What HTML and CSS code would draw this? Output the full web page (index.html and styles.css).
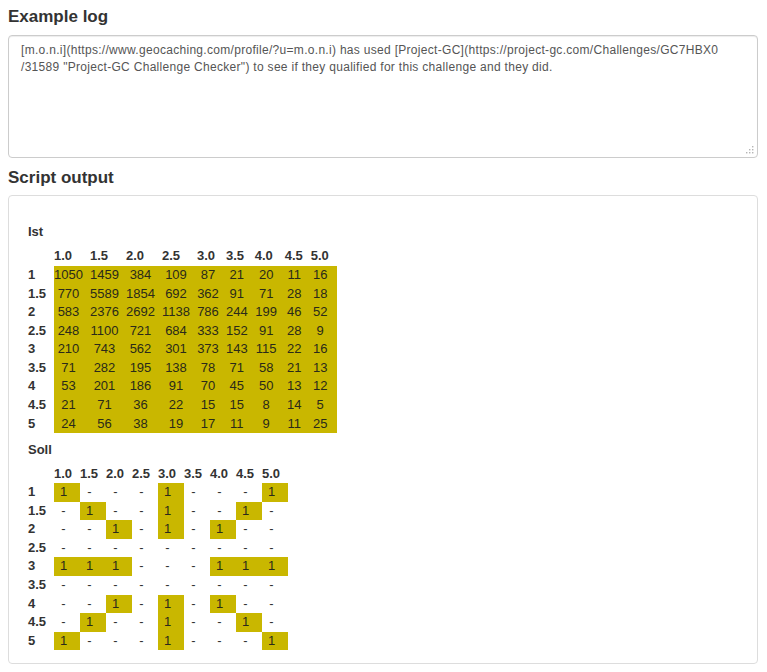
FILE: index.html
```html
<!DOCTYPE html>
<html lang="en">
<head>
<meta charset="utf-8">
<title>Example log</title>
<link rel="stylesheet" href="styles.css">
</head>
<body>
<div class="page">
  <h4 class="title">Example log</h4>
  <div class="logbox" role="textbox" aria-multiline="true" aria-readonly="true">
    <span class="nb">[m.o.n.i](https://www.geocaching.com/profile/?u=m.o.n.i)</span> has used <span class="nb">[Project-GC](https://project-gc.com/Challenges/GC7HBX0</span><wbr><span class="nb">/31589</span> "Project-GC Challenge Checker") to see if they qualified for this challenge and they did.
    <svg class="grip" width="9" height="9" viewBox="0 0 9 9" aria-hidden="true">
      <rect x="7" y="1" width="1.4" height="1.4" fill="#b5b5b5"/>
      <rect x="4" y="4" width="1.4" height="1.4" fill="#b5b5b5"/>
      <rect x="7" y="4" width="1.4" height="1.4" fill="#b5b5b5"/>
      <rect x="1" y="7" width="1.4" height="1.4" fill="#b5b5b5"/>
      <rect x="4" y="7" width="1.4" height="1.4" fill="#b5b5b5"/>
      <rect x="7" y="7" width="1.4" height="1.4" fill="#b5b5b5"/>
    </svg>
  </div>

  <h4 class="title title-output">Script output</h4>
  <div class="output">
    <div class="label">Ist</div>
    <table class="grid ist">
      <tr>
        <th class="rh"></th>
        <th class="w36">1.0</th><th class="w36">1.5</th><th class="w36">2.0</th><th class="w35">2.5</th><th class="w29">3.0</th><th class="w28">3.5</th><th class="w30">4.0</th><th class="w26">4.5</th><th class="w26">5.0</th>
      </tr>
      <tr><th>1</th><td class="hl">1050</td><td class="hl">1459</td><td class="hl">384</td><td class="hl">109</td><td class="hl">87</td><td class="hl">21</td><td class="hl">20</td><td class="hl">11</td><td class="hl">16</td></tr>
      <tr><th>1.5</th><td class="hl">770</td><td class="hl">5589</td><td class="hl">1854</td><td class="hl">692</td><td class="hl">362</td><td class="hl">91</td><td class="hl">71</td><td class="hl">28</td><td class="hl">18</td></tr>
      <tr><th>2</th><td class="hl">583</td><td class="hl">2376</td><td class="hl">2692</td><td class="hl">1138</td><td class="hl">786</td><td class="hl">244</td><td class="hl">199</td><td class="hl">46</td><td class="hl">52</td></tr>
      <tr><th>2.5</th><td class="hl">248</td><td class="hl">1100</td><td class="hl">721</td><td class="hl">684</td><td class="hl">333</td><td class="hl">152</td><td class="hl">91</td><td class="hl">28</td><td class="hl">9</td></tr>
      <tr><th>3</th><td class="hl">210</td><td class="hl">743</td><td class="hl">562</td><td class="hl">301</td><td class="hl">373</td><td class="hl">143</td><td class="hl">115</td><td class="hl">22</td><td class="hl">16</td></tr>
      <tr><th>3.5</th><td class="hl">71</td><td class="hl">282</td><td class="hl">195</td><td class="hl">138</td><td class="hl">78</td><td class="hl">71</td><td class="hl">58</td><td class="hl">21</td><td class="hl">13</td></tr>
      <tr><th>4</th><td class="hl">53</td><td class="hl">201</td><td class="hl">186</td><td class="hl">91</td><td class="hl">70</td><td class="hl">45</td><td class="hl">50</td><td class="hl">13</td><td class="hl">12</td></tr>
      <tr><th>4.5</th><td class="hl">21</td><td class="hl">71</td><td class="hl">36</td><td class="hl">22</td><td class="hl">15</td><td class="hl">15</td><td class="hl">8</td><td class="hl">14</td><td class="hl">5</td></tr>
      <tr><th>5</th><td class="hl">24</td><td class="hl">56</td><td class="hl">38</td><td class="hl">19</td><td class="hl">17</td><td class="hl">11</td><td class="hl">9</td><td class="hl">11</td><td class="hl">25</td></tr>
    </table>

    <div class="label">Soll</div>
    <table class="grid soll">
      <tr>
        <th class="rh"></th>
        <th>1.0</th><th>1.5</th><th>2.0</th><th>2.5</th><th>3.0</th><th>3.5</th><th>4.0</th><th>4.5</th><th>5.0</th>
      </tr>
      <tr><th>1</th><td class="hl">1</td><td>-</td><td>-</td><td>-</td><td class="hl">1</td><td>-</td><td>-</td><td>-</td><td class="hl">1</td></tr>
      <tr><th>1.5</th><td>-</td><td class="hl">1</td><td>-</td><td>-</td><td class="hl">1</td><td>-</td><td>-</td><td class="hl">1</td><td>-</td></tr>
      <tr><th>2</th><td>-</td><td>-</td><td class="hl">1</td><td>-</td><td class="hl">1</td><td>-</td><td class="hl">1</td><td>-</td><td>-</td></tr>
      <tr><th>2.5</th><td>-</td><td>-</td><td>-</td><td>-</td><td>-</td><td>-</td><td>-</td><td>-</td><td>-</td></tr>
      <tr><th>3</th><td class="hl">1</td><td class="hl">1</td><td class="hl">1</td><td>-</td><td>-</td><td>-</td><td class="hl">1</td><td class="hl">1</td><td class="hl">1</td></tr>
      <tr><th>3.5</th><td>-</td><td>-</td><td>-</td><td>-</td><td>-</td><td>-</td><td>-</td><td>-</td><td>-</td></tr>
      <tr><th>4</th><td>-</td><td>-</td><td class="hl">1</td><td>-</td><td class="hl">1</td><td>-</td><td class="hl">1</td><td>-</td><td>-</td></tr>
      <tr><th>4.5</th><td>-</td><td class="hl">1</td><td>-</td><td>-</td><td class="hl">1</td><td>-</td><td>-</td><td class="hl">1</td><td>-</td></tr>
      <tr><th>5</th><td class="hl">1</td><td>-</td><td>-</td><td>-</td><td class="hl">1</td><td>-</td><td>-</td><td>-</td><td class="hl">1</td></tr>
    </table>
  </div>
</div>
</body>
</html>
```

FILE: styles.css
```css
html, body {
  background: #ffffff;
}

body {
  margin: 8px;
  font-family: "Liberation Sans", Arial, sans-serif;
  color: #333333;
}

.page {
  width: 750px;
}

.title {
  margin: 0 0 8px;
  font-size: 17px;
  font-weight: bold;
  line-height: 1.1;
  color: #333333;
}

.title-output {
  margin-top: 11px;
}

.logbox {
  position: relative;
  box-sizing: border-box;
  height: 123px;
  padding: 6px 12px;
  border: 1px solid #cccccc;
  border-radius: 4px;
  box-shadow: inset 0 1px 1px rgba(0, 0, 0, 0.075);
  font-size: 12px;
  line-height: 1.428571;
  letter-spacing: 0.3px;
  color: #555555;
}

.nb {
  white-space: nowrap;
}

.grip {
  position: absolute;
  right: 3px;
  bottom: 3px;
}

.output {
  border: 1px solid #dddddd;
  border-radius: 4px;
  padding: 27px 19px 13px;
}

.label {
  font-size: 13px;
  font-weight: bold;
  line-height: 1.428571;
  margin-bottom: 5.5px;
  color: #333333;
}

.grid {
  border-collapse: collapse;
  border-spacing: 0;
  font-size: 13px;
  line-height: 1.428571;
  margin-bottom: 7.5px;
}

.grid:last-child {
  margin-bottom: 0;
}

.grid th,
.grid td {
  box-sizing: border-box;
  padding: 0 7px 0 0;
  vertical-align: top;
  color: #333333;
}

.grid th {
  text-align: left;
  font-weight: bold;
}

.grid td {
  text-align: center;
}

.grid .rh {
  width: 26px;
}

.grid td.hl {
  background: #c9b700;
  color: #2a2a1a;
}

.w36 { width: 36px; }
.w35 { width: 35px; }
.w30 { width: 30px; }
.w29 { width: 29px; }
.w28 { width: 28px; }
.w26 { width: 26px; }

.soll th {
  width: 26px;
}
```
